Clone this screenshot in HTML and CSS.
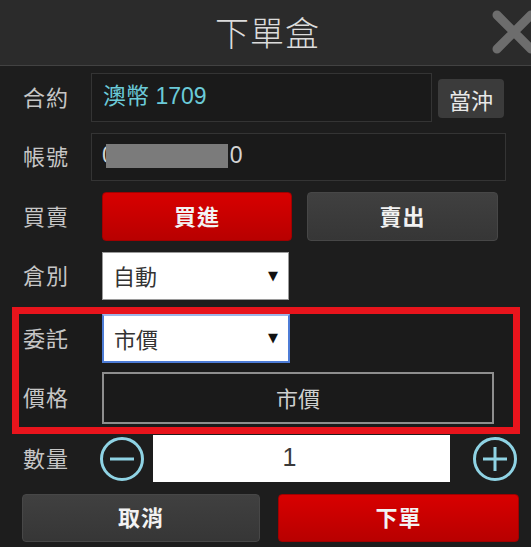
FILE: index.html
```html
<!DOCTYPE html>
<html lang="zh-Hant">
<head>
  <meta charset="UTF-8">
  <meta name="viewport" content="width=device-width, initial-scale=1.0">
  <title>下單盒</title>
  <link rel="stylesheet" href="styles.css">
</head>
<body>
<header class="box-header">
  <div></div>
  <h1>下單盒</h1>
  <div class="close">
    <svg width="46" height="46" viewBox="0 0 46 46">
      <path d="M6 6 L40 40 M40 6 L6 40" stroke="#6d6d6d" stroke-width="9" stroke-linecap="round"/>
    </svg>
  </div>
</header>

<div class="form">
  <!-- 合約 -->
  <div class="row row-contract">
    <span class="label">合約</span>
    <div class="field field-dark contract">澳幣 1709</div>
    <button class="btn-small">當沖</button>
  </div>

  <!-- 帳號 -->
  <div class="row row-account">
    <span class="label">帳號</span>
    <div class="field field-dark account">0<span class="mask"></span>0</div>
  </div>

  <!-- 買賣 -->
  <div class="row row-side">
    <span class="label">買賣</span>
    <div class="side-buttons">
      <button class="btn btn-red">買進</button>
      <button class="btn btn-gray">賣出</button>
    </div>
  </div>

  <!-- 倉別 -->
  <div class="row row-select">
    <span class="label">倉別</span>
    <div class="select">自動<span class="arrow">▼</span></div>
  </div>

  <!-- 委託 / 價格 -->
  <div class="highlight">
    <div class="row row-select">
      <span class="label">委託</span>
      <div class="select select-focus">市價<span class="arrow">▼</span></div>
    </div>
    <div class="row row-price">
      <span class="label">價格</span>
      <div class="price">市價</div>
    </div>
  </div>

  <!-- 數量 -->
  <div class="row row-qty">
    <span class="label">數量</span>
    <div class="qty">
      <svg class="circle-btn" width="46" height="46" viewBox="0 0 46 46">
        <circle cx="23" cy="23" r="20.5" fill="none" stroke="#8fd3e4" stroke-width="3"/>
        <path d="M11 23 H35" stroke="#8fd3e4" stroke-width="3"/>
      </svg>
      <div class="qty-input">1</div>
      <svg class="circle-btn" width="46" height="46" viewBox="0 0 46 46">
        <circle cx="23" cy="23" r="20.5" fill="none" stroke="#8fd3e4" stroke-width="3"/>
        <path d="M11 23 H35 M23 11 V35" stroke="#8fd3e4" stroke-width="3"/>
      </svg>
    </div>
  </div>

  <div class="actions">
    <button class="btn btn-gray cancel">取消</button>
    <button class="btn btn-red submit">下單</button>
  </div>
</div>
</body>
</html>
```

FILE: styles.css
```css
* {
  margin: 0;
  padding: 0;
  box-sizing: border-box;
}
body {
  width: 531px;
  height: 547px;
  overflow: hidden;
  background-color: #1d1d1d;
  color: #c9c9c9;
  font-family: "Noto Sans CJK TC", "Liberation Sans", sans-serif;
}
button {
  font-family: inherit;
  border: none;
  cursor: pointer;
}

/* Заголовок */
.box-header {
  height: 66px;
  background: #2b2b2b;
  border-bottom: 1px solid #424242;
  display: grid;
  grid-template-columns: 1fr auto 1fr;
  align-items: center;
}
.box-header h1 {
  font-size: 34px;
  font-weight: 300;
  color: #dcdcdc;
  letter-spacing: 1px;
  line-height: 1;
  padding-left: 4px;
  padding-bottom: 2px;
}
.close {
  justify-self: end;
  margin-right: -6px;
  margin-top: -1px;
  display: flex;
}

/* Форма */
.form {
  padding-top: 7px;
  display: flex;
  flex-direction: column;
}
.row {
  display: flex;
  align-items: center;
  padding-left: 23px;
}
.label {
  width: 68px;
  flex-shrink: 0;
  font-size: 22px;
  line-height: 1;
  color: #c6c6c6;
  letter-spacing: 1px;
  padding-bottom: 4px;
}
.field-dark {
  height: 100%;
  background: #1a1a1a;
  border: 1px solid #343434;
  display: flex;
  align-items: center;
  padding-left: 11px;
  font-size: 23px;
  line-height: 1;
}
.row-contract {
  height: 49px;
}
.contract {
  width: 341px;
  color: #6bcad8;
  font-family: "Liberation Sans", "Noto Sans CJK TC", sans-serif;
  padding-bottom: 3px;
}
.btn-small {
  width: 66px;
  height: 39px;
  margin-left: 6px;
  background: #3b3b3b;
  border-radius: 4px;
  color: #e8e8e8;
  font-size: 22px;
  margin-top: 2px;
}
.row-account {
  height: 48px;
  margin-top: 11px;
}
.account {
  width: 415px;
  color: #d4d4d4;
  font-family: "Liberation Sans", sans-serif;
  padding-left: 10px;
  padding-bottom: 3px;
}
.mask {
  display: inline-block;
  width: 122px;
  height: 24px;
  background: #7b7b7b;
  margin-left: -9px;
  margin-right: 2px;
}
.row-side {
  height: 49px;
  margin-top: 11px;
}
.side-buttons {
  margin-left: 11px;
  display: flex;
  gap: 15px;
}
.btn {
  height: 49px;
  border-radius: 4px;
  font-size: 22px;
  font-weight: 700;
  color: #f2f2f2;
  letter-spacing: 1px;
  padding-bottom: 4px;
}
.btn-red {
  background: linear-gradient(#d80000, #b80000);
  border: 1px solid #a00000;
}
.btn-gray {
  background: linear-gradient(#404040, #363636);
  border: 1px solid #474747;
}
.side-buttons .btn-red {
  width: 190px;
}
.side-buttons .btn-gray {
  width: 191px;
}
.row-select {
  height: 48px;
  margin-top: 11px;
}
.select {
  margin-left: 11px;
  width: 187px;
  height: 48px;
  background: #fff;
  border: 1px solid #9a9a9a;
  display: flex;
  align-items: center;
  justify-content: space-between;
  padding: 0 10px 2px 10px;
  color: #333;
  font-size: 22px;
  line-height: 1;
}
.arrow {
  font-size: 13px;
  color: #111;
  font-family: "DejaVu Sans", sans-serif;
}

/* Красная рамка */
.highlight {
  margin-top: 7px;
  margin-left: 12px;
  width: 508px;
  height: 127px;
  border: 7px solid #e8141c;
  background: #1b1b1b;
  display: flex;
  flex-direction: column;
}
.highlight .row {
  padding-left: 4px;
}
.highlight .label {
  width: 79px;
}
.highlight .row-select {
  margin-top: 0;
  height: 49px;
}
.select-focus {
  margin-left: 0;
  width: 188px;
  height: 49px;
  border: 2px solid #4d7cd6;
  border-top-color: #9db6e6;
}
.row-price {
  height: 52px;
  margin-top: 9px;
}
.price {
  width: 392px;
  height: 52px;
  border: 2px solid #8e8e8e;
  background: #1a1a1a;
  display: flex;
  align-items: center;
  justify-content: center;
  font-size: 22px;
  color: #cfcfcf;
  line-height: 1;
  padding-bottom: 3px;
}

/* Количество */
.row-qty {
  height: 47px;
  margin-top: 1px;
}
.qty {
  display: flex;
  align-items: center;
  margin-left: 8px;
}
.circle-btn {
  display: block;
}
.qty-input {
  width: 297px;
  height: 47px;
  margin: 0 22px 0 8px;
  padding-right: 24px;
  padding-bottom: 2px;
  background: #fff;
  color: #3a3a3a;
  font-family: "Liberation Sans", sans-serif;
  font-size: 25px;
  display: flex;
  align-items: center;
  justify-content: center;
}

/* Кнопки */
.actions {
  display: flex;
  gap: 18px;
  padding-left: 22px;
  margin-top: 12px;
}
.cancel {
  width: 238px;
  height: 48px;
}
.submit {
  width: 241px;
  height: 48px;
}
```
